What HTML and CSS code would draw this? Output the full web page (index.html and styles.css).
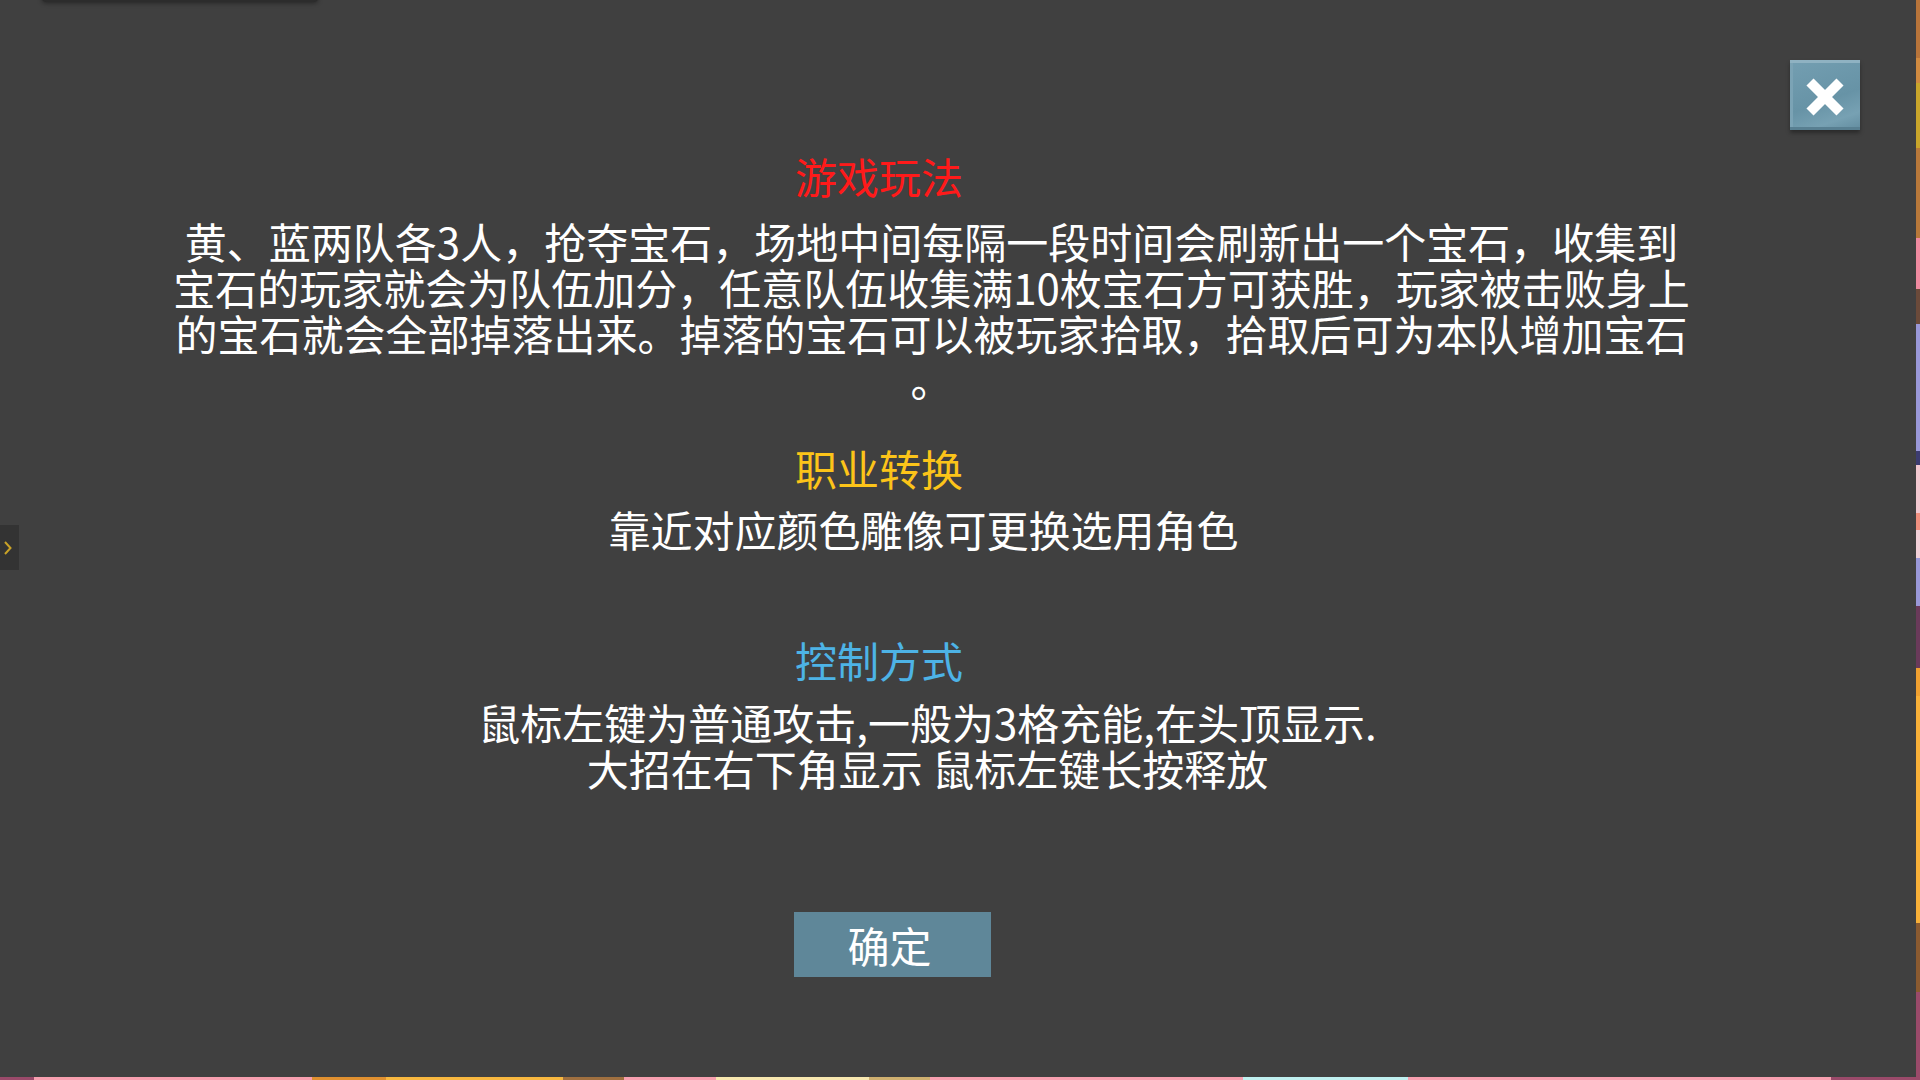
FILE: index.html
```html
<!DOCTYPE html>
<html lang="zh-CN">
<head>
    <meta charset="UTF-8">
    <meta name="viewport" content="width=device-width, initial-scale=1.0">
    <title>游戏说明</title>
    <link rel="stylesheet" href="styles.css">
</head>
<body>
    <div class="overlay">
        <!-- shadow of the top bar peeking in -->
        <div class="top-shade"></div>

        <!-- side drawer handle -->
        <div class="side-tab">
            <svg width="8" height="14" viewBox="0 0 8 14">
                <polyline points="1,1 6.5,7 1,13" fill="none" stroke="#c9a227" stroke-width="2"/>
            </svg>
        </div>

        <button class="close-btn" aria-label="关闭">
            <svg width="44" height="44" viewBox="0 0 44 44">
                <line x1="7" y1="7" x2="37" y2="37" stroke="#fff" stroke-width="10"/>
                <line x1="37" y1="7" x2="7" y2="37" stroke="#fff" stroke-width="10"/>
            </svg>
        </button>

        <div class="dialog">
            <h2 class="title title-red">游戏玩法</h2>
            <p class="desc desc-rules">黄、蓝两队各3人，抢夺宝石，场地中间每隔一段时间会刷新出一个宝石，收集到宝石的玩家就会为队伍加分，任意队伍收集满10枚宝石方可获胜，玩家被击败身上的宝石就会全部掉落出来。掉落的宝石可以被玩家拾取，拾取后可为本队增加宝石。</p>

            <h2 class="title title-yellow">职业转换</h2>
            <p class="desc desc-class">靠近对应颜色雕像可更换选用角色</p>

            <h2 class="title title-blue">控制方式</h2>
            <p class="desc desc-control">鼠标左键为普通攻击,一般为3格充能,在头顶显示.<br>大招在右下角显示 鼠标左键长按释放</p>

            <button class="ok-btn">确定</button>
        </div>
    </div>
</body>
</html>
```

FILE: styles.css
```css
html, body {
    margin: 0;
    height: 100%;
}

body {
    overflow: hidden;
    font-family: "Noto Sans CJK SC", "Noto Sans", sans-serif;
    color: #fff;
    /* bits of the game scene visible around the overlay */
    background:
        linear-gradient(to bottom,
            #b8743a 0 58px, #d08a40 58px 83px, #c9a52a 83px 148px, #b8783a 148px 238px,
            #f08aa0 238px 289px, #6b4a3a 289px 324px, #9a98d8 324px 451px, #3c3c70 451px 465px,
            #f2c8d0 465px 513px, #f09080 513px 530px, #f2d0d8 530px 558px, #9a98d8 558px 606px,
            #6a3a5a 606px 668px, #f0a030 668px 696px, #f8b038 696px 923px, #8a5a30 923px 992px,
            #9a4a6a 992px) right top / 4px 100% no-repeat,
        linear-gradient(to right,
            #9a4a6a 0 34px, #f8a0b0 34px 312px, #e09030 312px 386px, #f8b840 386px 563px,
            #a07040 563px 624px, #f8a0b0 624px 716px, #f8e8b0 716px 869px, #d0b070 869px 930px,
            #f8a0b0 930px 1243px, #c0f0f0 1243px 1408px, #f8a0b0 1408px 1831px,
            #9a4a6a 1831px) left bottom / 100% 3px no-repeat,
        #404040;
}

.overlay {
    position: relative;
    width: calc(100% - 4px);
    height: calc(100% - 3px);
    background: #404040;
}

.top-shade {
    position: absolute;
    top: -6px;
    left: 42px;
    width: 276px;
    height: 8px;
    background: #2c2c2c;
    box-shadow: 0 1px 5px rgba(0, 0, 0, 0.45);
    border-radius: 0 0 4px 4px;
}

.side-tab {
    position: absolute;
    left: 0;
    top: 525px;
    width: 19px;
    height: 45px;
    background: #333;
    display: flex;
    align-items: center;
    justify-content: center;
    padding-right: 3px;
    box-sizing: border-box;
}

.close-btn {
    position: absolute;
    top: 60px;
    right: 56px;
    width: 70px;
    height: 70px;
    padding: 0;
    border: none;
    border-top: 3px solid #8fb2c2;
    background: linear-gradient(160deg, #739eb1 0%, #6793a6 55%, #77a1b3 80%, #628c9f 100%);
    box-shadow: inset 0 -3px 0 #587f91, inset 3px 0 0 #7ba3b5, 0 3px 4px rgba(0, 0, 0, 0.35);
    display: flex;
    align-items: center;
    justify-content: center;
    cursor: pointer;
}

.dialog {
    width: 1525px;
    margin-left: 169px;
    padding-top: 153px;
    display: flex;
    flex-direction: column;
    align-items: center;
}

.title {
    margin: 0 105px 0 0;
    font-size: 42px;
    font-weight: normal;
    line-height: 46px;
}

.title-red {
    color: #ff1a1a;
}

.title-yellow {
    color: #fcc419;
    margin-top: 43px;
}

.title-blue {
    color: #4db3e6;
    margin-top: 85px;
}

.desc {
    margin: 0;
    font-size: 42px;
    line-height: 46px;
    text-align: center;
}

.desc-rules {
    width: 100%;
    margin-top: 19px;
    line-break: anywhere;
}

.desc-class {
    margin-top: 15px;
    margin-right: 16px;
}

.desc-control {
    margin-top: 16px;
    margin-right: 8px;
}

.ok-btn {
    margin: 121px 78px 0 0;
    width: 197px;
    height: 65px;
    padding: 0 6px 0 0;
    border: none;
    background: #5f8799;
    color: #fff;
    font-family: inherit;
    font-size: 42px;
    line-height: 65px;
    cursor: pointer;
}
```
